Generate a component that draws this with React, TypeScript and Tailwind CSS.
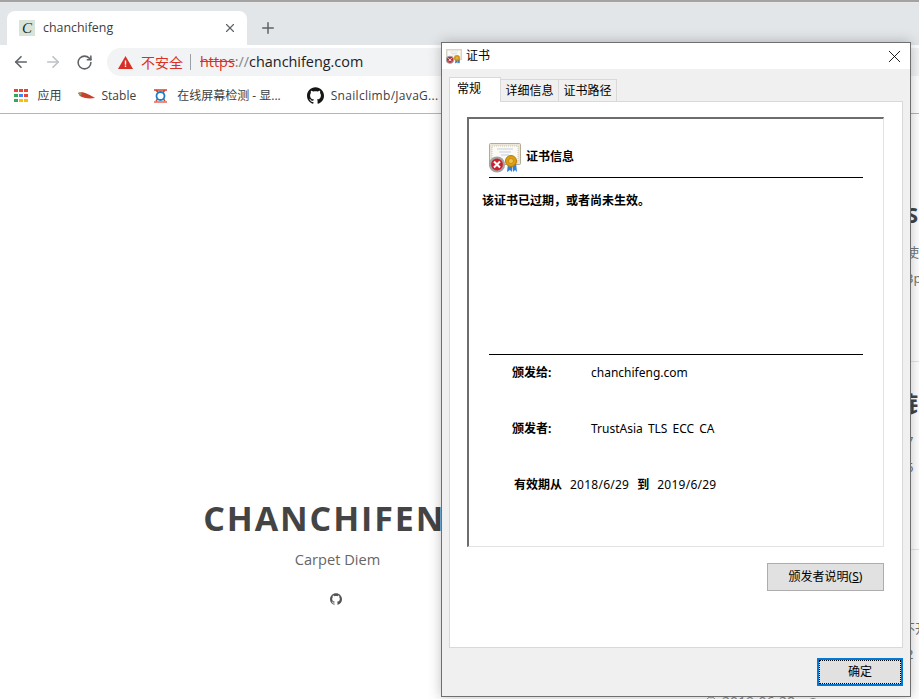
import { X, Plus, ArrowLeft, ArrowRight, RotateCw, Clock, Eye } from 'lucide-react'
import { SiGithub } from 'react-icons/si'

const uiFont = "font-['Open_Sans','Noto_Sans_CJK_SC',sans-serif]"
const cjkFont = "font-['Noto_Sans','Noto_Sans_CJK_SC',sans-serif]"

const APP_DOTS = [
  'bg-[#ea4335]', 'bg-[#ea4335]', 'bg-[#ea4335]',
  'bg-[#34a853]', 'bg-[#4285f4]', 'bg-[#ea4335]',
  'bg-[#34a853]', 'bg-[#fbbc05]', 'bg-[#fbbc05]',
]

function CertIcon({ size }: { size: number }) {
  return (
    <svg width={size} height={(size * 30) / 32} viewBox="0 0 32 30" className="shrink-0">
      <rect x="0.5" y="0.5" width="31" height="21" rx="1" fill="#ece6d8" stroke="#b5aa94" />
      <rect x="3" y="3" width="26" height="16" fill="#fbfaf6" stroke="#d0c7b3" strokeDasharray="1 1" />
      <path d="M8 6h16M10 9h12M12 12h8" stroke="#c4cfe0" strokeWidth="1" />
      <path d="M19 20l-1 9 3-2 2 2 0-9zM23 20l1 9 2-2 2 2-1-9z" fill="#2f7fdc" />
      <circle cx="22" cy="18" r="5.5" fill="#dd9f12" stroke="#b67d0c" />
      <circle cx="22" cy="18" r="2.5" fill="#f0c64a" stroke="#b67d0c" strokeWidth="0.7" />
      <circle cx="8" cy="21.5" r="7" fill="#c6222f" stroke="#a3a3a3" strokeWidth="2.2" />
      <path d="M5 18.5l6 6M11 18.5l-6 6" stroke="#fff" strokeWidth="2" />
    </svg>
  )
}

function BrowserChrome() {
  return (
    <div className={`${uiFont} shrink-0`}>
      <div className="h-[2px] bg-[#a3a3a3]" />
      <div className="h-[1px] bg-[#e8e8e8]" />
      <div className="flex h-[42px] items-end bg-[#e3e6e9] pl-[7px]">
        <div className="flex h-[34px] w-[240px] items-center rounded-t-[8px] bg-white pl-[12px] pr-[10px]">
          <span className="flex h-[16px] w-[16px] items-center justify-center bg-[#d8e4da] font-['Liberation_Serif',serif] text-[15px] italic leading-none text-[#1d2a22]">
            C
          </span>
          <span className="ml-[8px] flex-1 text-[12.4px] text-[#3c4043]">chanchifeng</span>
          <X size={14} strokeWidth={2} className="text-[#5f6368]" />
        </div>
        <Plus size={18} strokeWidth={2} className="mb-[8px] ml-[12px] text-[#5f6368]" />
      </div>
      <div className="flex h-[33px] items-center bg-white pl-[12px] pt-[1px]">
        <ArrowLeft size={18} strokeWidth={2.2} className="text-[#5f6368]" />
        <ArrowRight size={18} strokeWidth={2.2} className="ml-[14px] text-[#bdc1c6]" />
        <RotateCw size={17} strokeWidth={2.2} className="ml-[14px] text-[#5f6368]" />
        <div className="ml-[14px] flex h-[28px] flex-1 items-center rounded-l-[14px] bg-[#f1f3f4] pl-[11px]">
          <svg width="15" height="13" viewBox="0 0 15 13">
            <path d="M7.5 0L15 13H0z" fill="#d93025" />
            <path d="M6.8 4.5h1.4v4.2H6.8zM6.8 9.6h1.4V11H6.8z" fill="#fff" />
          </svg>
          <span className="ml-[8px] text-[14px] text-[#d93025]">不安全</span>
          <span className="ml-[7px] mr-[9px] h-[16px] w-[1px] bg-[#9aa0a6]" />
          <span className="text-[14.4px] text-[#d93025] line-through">https</span>
          <span className="text-[14.4px] text-[#80868b]">://</span>
          <span className="text-[14.4px] text-[#202124]">chanchifeng.com</span>
        </div>
      </div>
      <div className="flex h-[36px] items-center border-b border-[#b5b5b5] bg-white pl-[14px] text-[12px] text-[#3c4043]">
        <div className="grid grid-cols-3 gap-[1.5px]">
          {APP_DOTS.map((color, i) => (
            <span key={i} className={`h-[3.5px] w-[3.5px] ${color}`} />
          ))}
        </div>
        <span className="ml-[10px]">应用</span>
        <svg width="17" height="8" viewBox="0 0 17 8" className="ml-[16px]">
          <path d="M0 1c5-2 10 1 17 5-6 1-12 0-15-2z" fill="#c8402a" />
          <path d="M0 1c2-1 3 0 4 1L2 4z" fill="#8a9a6a" />
        </svg>
        <span className="ml-[7px]">Stable</span>
        <svg width="15" height="16" viewBox="0 0 15 16" className="ml-[17px]">
          <path d="M1 2h13M3 2l9 11M12 2L3 13" stroke="#d9402b" strokeWidth="1.5" fill="none" />
          <circle cx="7.5" cy="8" r="4" fill="#fff" stroke="#1c7fc4" strokeWidth="1.8" />
          <path d="M1 14h13" stroke="#d9402b" strokeWidth="1.2" />
        </svg>
        <span className="ml-[9px]">在线屏幕检测 - 显...</span>
        <SiGithub size={17} className="ml-[26px] text-[#161614]" />
        <span className="ml-[7px] tracking-[0.3px]">Snailclimb/JavaG...</span>
      </div>
    </div>
  )
}

function Hero() {
  return (
    <div className={`${uiFont} flex w-[675px] flex-col items-center pt-[381px]`}>
      <h1 className="whitespace-nowrap text-[34px] font-bold leading-[46px] tracking-[1.9px] text-[#444]">CHANCHIFENG</h1>
      <p className="mt-[8px] text-[14.6px] leading-[20px] text-[#666]">Carpet Diem</p>
      <SiGithub size={12} className="mr-[3px] mt-[24px] text-[#555]" />
    </div>
  )
}

function PostSliver({ title, lines }: { title: string; lines: string[] }) {
  return (
    <div className="pl-[231px]">
      <div className="whitespace-nowrap text-[22px] font-bold leading-[30px] text-[#444]">{title}</div>
      <div className="mt-[13px] flex flex-col gap-[6px]">
        {lines.map((line) => (
          <div key={line} className="whitespace-nowrap text-[13px] leading-[20px] text-[#777]">{line}</div>
        ))}
      </div>
    </div>
  )
}

function PostList() {
  return (
    <div className={`${cjkFont} relative flex-1 overflow-hidden`}>
      <div className="h-[247px] pt-[85px]">
        <PostSliver title="Sl" lines={['使', '3p']} />
      </div>
      <div className="h-[188px] border-t border-[#e5e5e5] pt-[26px]">
        <PostSliver title="钅" lines={['7', '6']} />
      </div>
      <div className="h-[143px] border-t border-[#e5e5e5] pt-[68px]">
        <div className="whitespace-nowrap pl-[227px] text-[13px] leading-[20px] text-[#777]">不开</div>
        <div className="mt-[6px] whitespace-nowrap pl-[231px] text-[13px] leading-[20px] text-[#777]">2</div>
      </div>
      <div className="flex items-center pl-[30px] text-[14px] leading-[20px] text-[#888]">
        <Clock size={12} />
        <span className="ml-[5px]">2019-06-28</span>
        <Eye size={12} className="ml-[12px]" />
      </div>
    </div>
  )
}

function CertRow({ label, value }: { label: string; value: string }) {
  return (
    <div className="flex h-[56px] items-start pl-[23px] text-[12px] leading-[18px] text-black">
      <span className="w-[79px] font-bold">{label}</span>
      <span className="[word-spacing:2px]">{value}</span>
    </div>
  )
}

function CertDialog() {
  return (
    <div className={`${cjkFont} absolute left-[441px] top-[42px] flex h-[655px] w-[470px] flex-col border border-[#6f6f6f] bg-[#f0f0f0] shadow-[0_0_12px_rgba(0,0,0,0.25)]`}>
      <div className="flex h-[26px] shrink-0 items-center bg-white pl-[4px] pr-[5px]">
        <CertIcon size={16} />
        <span className="ml-[4px] flex-1 text-[12px] text-black">证书</span>
        <X size={21} strokeWidth={1} className="text-black" />
      </div>
      <div className="flex h-[32px] shrink-0 items-end pl-[7px] text-[12px] text-black">
        <div className="relative z-10 -mb-[1px] flex h-[25px] w-[52px] items-center border border-b-0 border-[#d9d9d9] bg-white pb-[3px] pl-[7px]">常规</div>
        <div className="-ml-[1px] flex h-[22px] w-[59px] items-center justify-center border border-b-0 border-[#d9d9d9]">详细信息</div>
        <div className="-ml-[1px] flex h-[22px] w-[59px] items-center justify-center border border-b-0 border-[#d9d9d9]">证书路径</div>
      </div>
      <div className="mx-[7px] flex h-[547px] shrink-0 flex-col border border-[#d9d9d9] bg-white pl-[17px] pr-[18px] pt-[15px]">
        <div className="flex h-[430px] shrink-0 flex-col border-b border-l-2 border-r border-t-2 border-b-[#e3e3e3] border-l-[#6d6d6d] border-r-[#e3e3e3] border-t-[#6d6d6d] pl-[20px] pr-[20px] text-[12px] text-black">
          <div className="mt-[24px] flex h-[35px] shrink-0 items-start border-b border-black">
            <CertIcon size={32} />
            <span className="ml-[5px] mt-[5px] font-bold leading-[18px]">证书信息</span>
          </div>
          <p className="-ml-[7px] mt-[14px] font-bold leading-[18px]">该证书已过期，或者尚未生效。</p>
          <div className="mt-[144px] h-0 shrink-0 border-b border-black" />
          <div className="pt-[9px]">
            <CertRow label="颁发给:" value="chanchifeng.com" />
            <CertRow label="颁发者:" value="TrustAsia TLS ECC CA" />
            <div className="flex items-start pl-[25px] leading-[18px]">
              <span className="w-[56px] font-bold">有效期从</span>
              <span className="tracking-[0.25px]">2018/6/29</span>
              <span className="ml-[8px] font-bold">到</span>
              <span className="ml-[8px] tracking-[0.25px]">2019/6/29</span>
            </div>
          </div>
        </div>
        <div className="mt-[16px] flex justify-end">
          <button className="flex h-[28px] w-[117px] items-center justify-center border border-[#adadad] bg-[#e1e1e1] text-[12px] text-black">
            颁发者说明(<span className="underline">S</span>)
          </button>
        </div>
      </div>
      <div className="flex flex-1 justify-end pr-[7px] pt-[10px]">
        <button className="flex h-[28px] w-[86px] items-center justify-center border-2 border-[#0078d7] bg-[#e1e1e1] p-0 text-[12px] text-black">
          <span className="flex h-full w-full items-center justify-center border border-dotted border-black">确定</span>
        </button>
      </div>
    </div>
  )
}

export default function App() {
  return (
    <div className="relative flex h-[699px] w-[919px] flex-col overflow-hidden bg-white">
      <BrowserChrome />
      <div className="flex flex-1 overflow-hidden">
        <Hero />
        <PostList />
      </div>
      <CertDialog />
    </div>
  )
}
